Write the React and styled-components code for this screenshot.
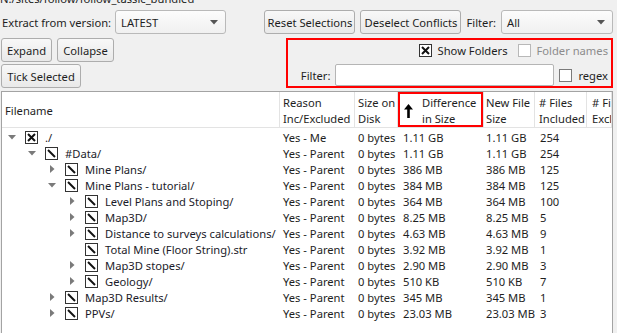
import React from 'react'
import styled, { createGlobalStyle } from 'styled-components'

const GlobalStyle = createGlobalStyle`
  html, body {
    margin: 0;
    padding: 0;
    background: #f0f0f0;
  }
  body {
    font-family: 'Noto Sans', 'Open Sans', sans-serif;
    font-size: 11.2px;
    color: #1e1e1e;
  }
`

const Window = styled.div`
  width: 617px;
  height: 333px;
  overflow: hidden;
  display: flex;
  flex-direction: column;
  background: #f0f0f0;
`

const PathLine = styled.div`
  height: 16px;
  line-height: 16px;
  margin-top: -9px;
  white-space: nowrap;
`

const TopBar = styled.div`
  display: flex;
  align-items: center;
  justify-content: space-between;
  margin-top: 3px;
  padding: 0 4px 0 2px;
  height: 24px;
`

const Group = styled.div`
  display: flex;
  align-items: center;
  gap: ${p => p.$gap ?? 5}px;
`

const Label = styled.span`
  white-space: nowrap;
  padding-top: 1px;
  margin-left: ${p => p.$ml ?? 0}px;
  color: ${p => (p.$disabled ? '#8c8c8c' : 'inherit')};
`

const Button = styled.button`
  box-sizing: border-box;
  width: ${p => p.$w}px;
  height: 24px;
  padding: 1px 0 0;
  font: inherit;
  color: inherit;
  white-space: nowrap;
  border: 1px solid #adadad;
  border-radius: 3px;
  background: linear-gradient(#f8f8f8, #e9e9e9);
`

const Combo = styled.div`
  box-sizing: border-box;
  width: ${p => p.$w}px;
  height: 24px;
  display: flex;
  align-items: center;
  justify-content: space-between;
  padding: 1px 7px 0 5px;
  border: 1px solid #b9b9b9;
  border-radius: 3px;
  background: linear-gradient(#fcfcfc, #f0f0f0);
`

const ControlsArea = styled.div`
  display: flex;
  justify-content: space-between;
  margin-top: 4px;
  padding: 0 4px 0 1px;
`

const LeftColumn = styled.div`
  display: flex;
  flex-direction: column;
  gap: 2px;
`

const FilterPanel = styled.div`
  box-sizing: border-box;
  width: 327px;
  height: 50px;
  display: flex;
  flex-direction: column;
  outline: 2px solid #ff0000;
  outline-offset: -2px;
`

const PanelRow = styled.div`
  display: flex;
  align-items: center;
  justify-content: flex-end;
  height: ${p => p.$h}px;
  margin-top: ${p => p.$mt ?? 0}px;
  padding-right: 5px;
`

const TextField = styled.div`
  box-sizing: border-box;
  width: 219px;
  height: 22px;
  margin-left: 5px;
  background: #fff;
  border: 1px solid #b5b5b5;
  border-radius: 2px;
`

const Table = styled.div`
  flex: 1;
  min-height: 0;
  margin: 3px 4px 0 1px;
  border: 1px solid #a3a3a3;
  border-bottom: none;
  background: #fff;
  overflow: hidden;
`

const cols = '278px 75px 43px 86px 51px 52px 1fr'

const HeaderRow = styled.div`
  display: grid;
  grid-template-columns: ${cols};
  height: 35px;
  border-bottom: 1px solid #e3e3e3;
`

const HeaderCell = styled.div`
  display: flex;
  align-items: center;
  gap: 9px;
  padding: 2px 0 0 ${p => p.$pad}px;
  line-height: 16px;
  white-space: nowrap;
  overflow: hidden;
  border-right: 1px solid #e3e3e3;
  box-shadow: ${p => (p.$marked ? 'inset 0 0 0 2px #ff0000' : 'none')};
`

const Body = styled.div`
  padding-top: 1px;
`

const Row = styled.div`
  display: grid;
  grid-template-columns: ${cols};
  height: 16px;
  line-height: 16px;
`

const Cell = styled.div`
  padding: 1px 0 0 ${p => p.$pad}px;
  white-space: nowrap;
  overflow: hidden;
`

const TreeCell = styled.div`
  display: flex;
  align-items: center;
  padding-left: ${p => 1 + p.$level * 20}px;
  white-space: nowrap;
  overflow: hidden;
`

const Disclosure = styled.span`
  flex: none;
  width: 18px;
  height: 16px;
  display: flex;
  align-items: center;
  justify-content: center;
`

const TreeName = styled.span`
  flex: none;
  margin-left: 7px;
  padding-top: 2px;
  color: #1b1b2a;
`

const BoxSvg = styled.svg`
  flex: none;
  display: block;
  margin-left: ${p => p.$ml ?? 0}px;
`

const CheckBox = ({ mark, tone = '#333', ml }) => (
  <BoxSvg width="13" height="13" viewBox="0 0 13 13" $ml={ml}>
    <rect x="0.5" y="0.5" width="12" height="12" fill="#fff" stroke={tone} />
    {mark === 'x' && (
      <path d="M3 3 L10 10 M10 3 L3 10" stroke="#111" strokeWidth="2" />
    )}
    {mark === 'part' && (
      <path d="M3 3 L10 10" stroke="#111" strokeWidth="2" />
    )}
  </BoxSvg>
)

const ComboArrow = () => (
  <svg width="8" height="5" viewBox="0 0 8 5">
    <path d="M0 0 H8 L4 4.5 Z" fill="#555" />
  </svg>
)

const TreeArrow = ({ open }) =>
  open ? (
    <svg width="8" height="5" viewBox="0 0 8 5">
      <path d="M0 0 H8 L4 4.5 Z" fill="#7a7a7a" />
    </svg>
  ) : (
    <svg width="5" height="8" viewBox="0 0 5 8">
      <path d="M0 0 V8 L4.5 4 Z" fill="#7a7a7a" />
    </svg>
  )

const SortArrow = () => (
  <svg width="9" height="14" viewBox="0 0 9 14">
    <path d="M4.5 0 L9 5.5 H5.8 V14 H3.2 V5.5 H0 Z" fill="#000" />
  </svg>
)

const columns = [
  { key: 'name', pad: 3, title: ['Filename'] },
  { key: 'reason', pad: 3, title: ['Reason', 'Inc/Excluded'] },
  { key: 'disk', pad: 3, title: ['Size on', 'Disk'] },
  { key: 'diff', pad: 6, title: ['Difference', 'in Size'], sorted: true },
  { key: 'size', pad: 2, title: ['New File', 'Size'] },
  { key: 'files', pad: 4, title: ['# Files', 'Included'] },
  { key: 'excl', pad: 5, title: ['# Files', 'Excluded'] },
]

const rows = [
  { level: 0, arrow: 'open', mark: 'x', name: './', reason: 'Yes - Me', diff: '1.11 GB', files: '254' },
  { level: 1, arrow: 'open', name: '#Data/', diff: '1.11 GB', files: '254' },
  { level: 2, arrow: 'closed', name: 'Mine Plans/', diff: '386 MB', files: '125' },
  { level: 2, arrow: 'open', name: 'Mine Plans - tutorial/', diff: '384 MB', files: '125' },
  { level: 3, arrow: 'closed', name: 'Level Plans and Stoping/', diff: '364 MB', files: '100' },
  { level: 3, arrow: 'closed', name: 'Map3D/', diff: '8.25 MB', files: '5' },
  { level: 3, arrow: 'closed', name: 'Distance to surveys calculations/', diff: '4.63 MB', files: '9' },
  { level: 3, name: 'Total Mine (Floor String).str', diff: '3.92 MB', files: '1' },
  { level: 3, arrow: 'closed', name: 'Map3D stopes/', diff: '2.90 MB', files: '3' },
  { level: 3, arrow: 'closed', name: 'Geology/', diff: '510 KB', files: '7' },
  { level: 2, arrow: 'closed', name: 'Map3D Results/', diff: '345 MB', files: '1' },
  { level: 2, arrow: 'closed', name: 'PPVs/', diff: '23.03 MB', files: '3' },
]

const App = () => {
  return (
    <Window>
      <GlobalStyle />
      <PathLine>N:/sites/follow/follow_tassic_bundled</PathLine>

      <TopBar>
        <Group $gap={4}>
          <Label>Extract from version:</Label>
          <Combo $w={111}>
            <span>LATEST</span>
            <ComboArrow />
          </Combo>
        </Group>
        <Group $gap={5}>
          <Button $w={91}>Reset Selections</Button>
          <Button $w={101}>Deselect Conflicts</Button>
          <Label>Filter:</Label>
          <Combo $w={112}>
            <span>All</span>
            <ComboArrow />
          </Combo>
        </Group>
      </TopBar>

      <ControlsArea>
        <LeftColumn>
          <Group $gap={5}>
            <Button $w={51}>Expand</Button>
            <Button $w={57}>Collapse</Button>
          </Group>
          <Group>
            <Button $w={80}>Tick Selected</Button>
          </Group>
        </LeftColumn>

        <FilterPanel>
          <PanelRow $h={24}>
            <CheckBox mark="x" />
            <Label $ml={6}>Show Folders</Label>
            <CheckBox tone="#b8b8b8" ml={10} />
            <Label $disabled $ml={6}>Folder names</Label>
          </PanelRow>
          <PanelRow $h={22} $mt={2}>
            <Label>Filter:</Label>
            <TextField />
            <CheckBox tone="#7a7a7a" ml={5} />
            <Label $ml={6}>regex</Label>
          </PanelRow>
        </FilterPanel>
      </ControlsArea>

      <Table>
        <HeaderRow>
          {columns.map(c => (
            <HeaderCell key={c.key} $pad={c.pad} $marked={c.sorted}>
              {c.sorted && <SortArrow />}
              <div>
                {c.title.map(t => (
                  <div key={t}>{t}</div>
                ))}
              </div>
            </HeaderCell>
          ))}
        </HeaderRow>
        <Body>
          {rows.map(r => (
            <Row key={r.name}>
              <TreeCell $level={r.level}>
                <Disclosure>{r.arrow && <TreeArrow open={r.arrow === 'open'} />}</Disclosure>
                <CheckBox mark={r.mark || 'part'} ml={4} />
                <TreeName>{r.name}</TreeName>
              </TreeCell>
              <Cell $pad={3}>{r.reason || 'Yes - Parent'}</Cell>
              <Cell $pad={3}>0 bytes</Cell>
              <Cell $pad={5}>{r.diff}</Cell>
              <Cell $pad={2}>{r.diff}</Cell>
              <Cell $pad={5}>{r.files}</Cell>
              <Cell $pad={5} />
            </Row>
          ))}
        </Body>
      </Table>
    </Window>
  )
}

export default App
